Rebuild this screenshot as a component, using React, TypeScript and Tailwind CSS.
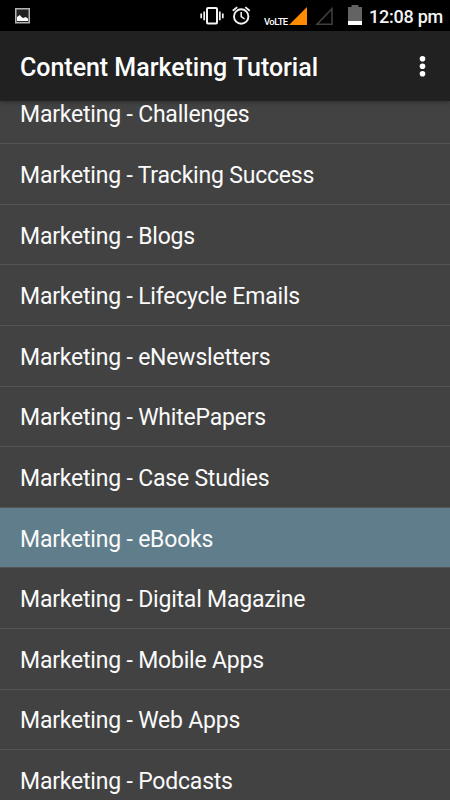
const topics = [
  'Challenges',
  'Tracking Success',
  'Blogs',
  'Lifecycle Emails',
  'eNewsletters',
  'WhitePapers',
  'Case Studies',
  'eBooks',
  'Digital Magazine',
  'Mobile Apps',
  'Web Apps',
  'Podcasts',
];

const selected = 'eBooks';

function PictureIcon() {
  return (
    <svg className="ml-[15px] h-[16px] w-[15px]" viewBox="0 0 15 16">
      <rect x="0.75" y="0.75" width="13.5" height="14" fill="#222" stroke="#b4b4b4" strokeWidth="1.5" />
      <path d="M2 13V9L3.5 8L4.8 7L7 9.5L8.5 10L10.5 9L13 10.5V13Z" fill="#fff" />
    </svg>
  );
}

function VibrateIcon() {
  return (
    <svg className="h-[18px] w-[24px]" viewBox="0 0 24 18" fill="none" stroke="#f4f4f4">
      <rect x="7" y="1" width="10" height="15.5" rx="1" strokeWidth="2" />
      <path d="M4.2 4.5V13.2M19.8 4.5V13.2" strokeWidth="1.7" />
      <path d="M1.2 6.5V11.3M22.8 6.5V11.3" strokeWidth="1.7" />
    </svg>
  );
}

function AlarmIcon() {
  return (
    <svg className="ml-[8px] h-[19px] w-[19px]" viewBox="0 0 19 19" fill="none" stroke="#f4f4f4">
      <circle cx="9.2" cy="10.5" r="7.2" strokeWidth="1.9" />
      <path d="M0.8 4.8L5.2 1.1M17.7 4.8L13.3 1.1" strokeWidth="1.8" />
      <path d="M9.2 6V10.6L12.6 13" strokeWidth="1.5" />
    </svg>
  );
}

function StatusBar() {
  return (
    <div className="flex h-[31px] shrink-0 items-start bg-black">
      <div className="pt-[8px]">
        <PictureIcon />
      </div>
      <div className="ml-[170px] flex pt-[7px]">
        <VibrateIcon />
        <div className="-mt-px">
          <AlarmIcon />
        </div>
      </div>
      <span className="ml-[13px] w-[24px] pt-[15px] text-[9.5px] leading-[13px] font-medium tracking-[-0.55px] whitespace-nowrap text-white">
        VoLTE
      </span>
      <svg className="mt-[6px] ml-[1px] h-[20px] w-[20px]" viewBox="0 0 20 20">
        <path d="M0 19L18 1V19Z" fill="#ff8b00" />
      </svg>
      <svg className="mt-[6px] ml-[6px] h-[20px] w-[20px]" viewBox="0 0 20 20">
        <path d="M2 18.2L17 2.7V18.2Z" fill="none" stroke="#414141" strokeWidth="1.5" />
      </svg>
      <svg className="mt-[5px] ml-[13px] h-[20px] w-[14px]" viewBox="0 0 14 20">
        <path d="M0 2H3.5V0H10.5V2H14V20H0Z" fill="#636363" />
        <path d="M0 16H14V20H0Z" fill="#fff" />
      </svg>
      <span className="ml-[7px] pt-[6px] text-[18px] leading-[22px] font-medium tracking-[-0.25px] whitespace-nowrap text-[#f4f4f4]">
        12:08 pm
      </span>
    </div>
  );
}

function AppBar() {
  return (
    <header className="z-10 flex h-[70px] shrink-0 items-center justify-between bg-[#212121] pr-[24px] pl-[20px] shadow-[0_1px_4px_rgba(0,0,0,0.35)]">
      <h1 className="pt-[4px] text-[25px] leading-[30px] font-medium tracking-[-0.03px] whitespace-nowrap text-white">
        Content Marketing Tutorial
      </h1>
      <svg className="h-[22px] w-[7px]" viewBox="0 0 7 22" fill="#fff">
        <circle cx="3.5" cy="3.8" r="2.8" />
        <circle cx="3.5" cy="11.2" r="2.8" />
        <circle cx="3.5" cy="18.7" r="2.8" />
      </svg>
    </header>
  );
}

export default function App() {
  return (
    <div className="flex h-[800px] w-[450px] flex-col overflow-hidden bg-[#424242] font-['Roboto',sans-serif]">
      <StatusBar />
      <AppBar />
      <main className="min-h-0 flex-1 overflow-hidden">
        <ul className="-mt-[17.5px]">
          {topics.map((topic) => (
            <li
              key={topic}
              className={`flex h-[60.62px] items-center border-b border-[#555555] pt-[4px] pl-[20px] text-[23px] leading-[28px] tracking-[-0.2px] whitespace-nowrap text-[#fafafa] ${
                topic === selected ? 'bg-[#607d8b]' : ''
              }`}
            >
              Marketing - {topic}
            </li>
          ))}
        </ul>
      </main>
    </div>
  );
}
